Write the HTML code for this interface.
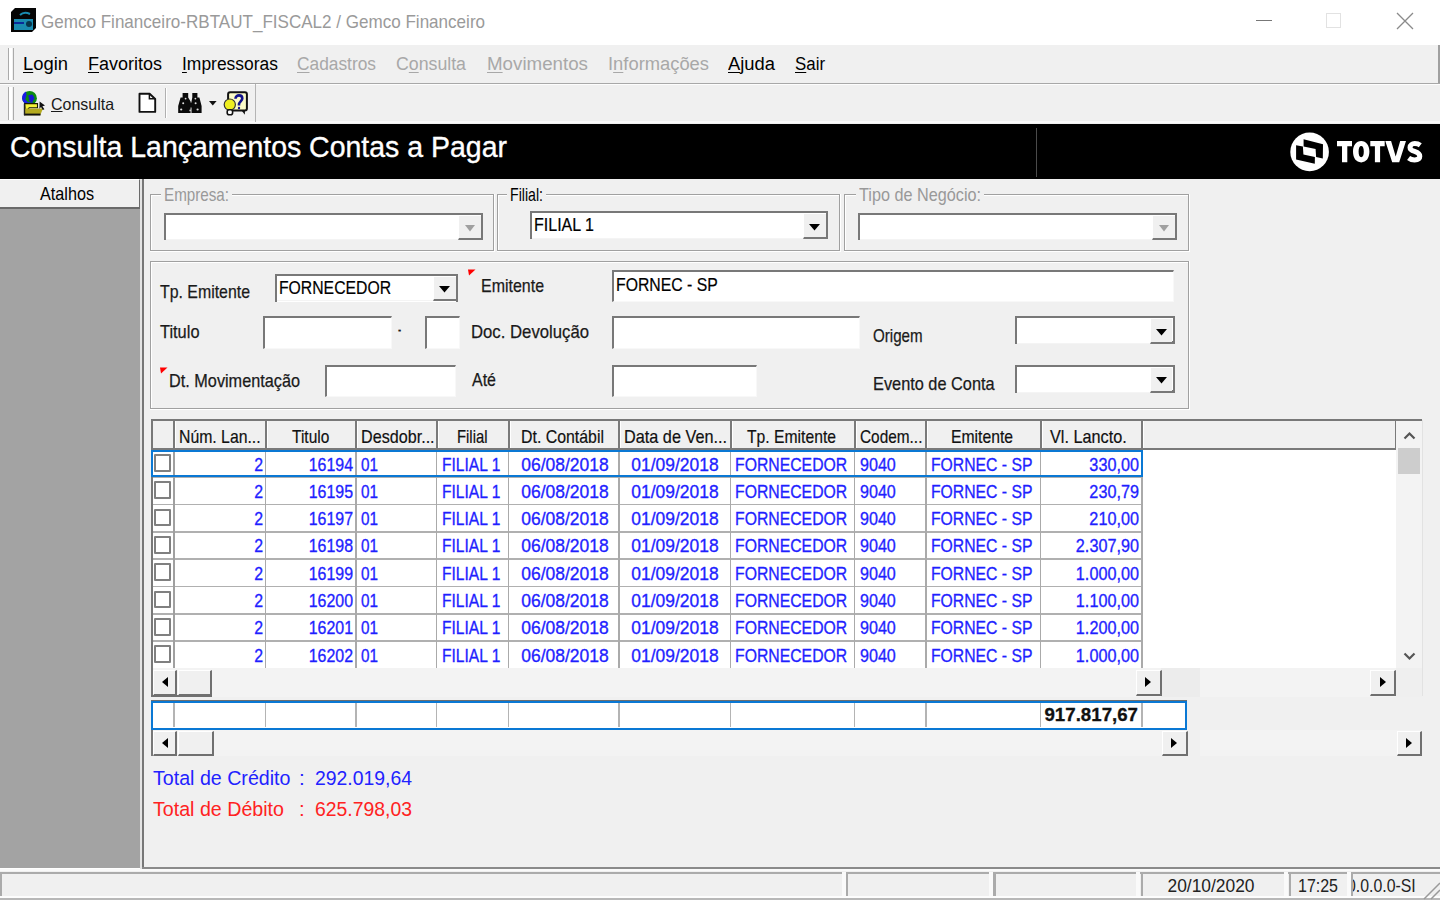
<!DOCTYPE html>
<html><head><meta charset="utf-8"><style>
html,body{margin:0;padding:0;width:1440px;height:900px;overflow:hidden;background:#f0f0f0;font-family:"Liberation Sans", sans-serif;}
body>div,body>svg,div>div{position:absolute;}
svg{position:absolute;overflow:visible}
u{text-decoration-thickness:1.3px}
</style></head><body>
<div style="left:0.00px;top:0.00px;width:1440.00px;height:45.00px;background:#fff"></div>
<svg style="left:11px;top:8px" width="26" height="25" viewBox="0 0 26 25">
<path d="M4 0H25V20L21 24H0V4Z" fill="#050505"/>
<rect x="3" y="11" width="19" height="11" fill="#1a8bb0"/>
<rect x="3" y="14" width="10" height="2" fill="#0a2a9a"/>
<circle cx="18" cy="16" r="3" fill="#06354a"/>
<path d="M9 7 Q13 3 19 6" stroke="#1a8bb0" stroke-width="2" fill="none"/>
</svg>
<div style="left:41.00px;top:11.92px;font-size:19px;line-height:19px;color:#9a9a9a;font-weight:normal;white-space:pre;transform:scaleX(0.8973);transform-origin:left center;">Gemco Financeiro-RBTAUT_FISCAL2 / Gemco Financeiro</div>
<div style="left:1256.00px;top:20.00px;width:16.00px;height:1.00px;background:#777"></div>
<div style="left:1326.00px;top:13.00px;width:15.00px;height:15.00px;border:1px solid #e2e2e2;box-sizing:border-box"></div>
<svg style="left:1396px;top:12px" width="18" height="18" viewBox="0 0 18 18"><path d="M1 1L17 17M17 1L1 17" stroke="#8a8a8a" stroke-width="1.3"/></svg>
<div style="left:0.00px;top:44.50px;width:1440.00px;height:38.50px;background:#f0f0f0"></div>
<div style="left:0.00px;top:82.60px;width:1440.00px;height:1.50px;background:#a8a8a8"></div>
<div style="left:0.00px;top:84.10px;width:1440.00px;height:1.00px;background:#fdfdfd"></div>
<div style="left:1438.00px;top:45.00px;width:1.50px;height:38.00px;background:#a0a0a0"></div>
<div style="left:8.00px;top:48.00px;width:1.20px;height:32.00px;background:#aaa"></div>
<div style="left:9.20px;top:48.00px;width:2.50px;height:32.00px;background:#fff"></div>
<div style="left:12.50px;top:48.00px;width:1.20px;height:32.00px;background:#aaa"></div>
<div style="left:23.00px;top:54.76px;font-size:18px;line-height:18px;color:#000;font-weight:normal;white-space:pre;transform:scaleX(1.0213);transform-origin:left center;text-underline-offset:2px"><u>L</u>ogin</div>
<div style="left:88.00px;top:54.76px;font-size:18px;line-height:18px;color:#000;font-weight:normal;white-space:pre;transform:scaleX(0.9994);transform-origin:left center;text-underline-offset:2px"><u>F</u>avoritos</div>
<div style="left:181.50px;top:54.76px;font-size:18px;line-height:18px;color:#000;font-weight:normal;white-space:pre;transform:scaleX(0.9691);transform-origin:left center;text-underline-offset:2px"><u>I</u>mpressoras</div>
<div style="left:297.00px;top:54.76px;font-size:18px;line-height:18px;color:#a8a8a8;font-weight:normal;white-space:pre;transform:scaleX(0.9627);transform-origin:left center;text-underline-offset:2px"><u>C</u>adastros</div>
<div style="left:396.00px;top:54.76px;font-size:18px;line-height:18px;color:#a8a8a8;font-weight:normal;white-space:pre;transform:scaleX(0.9850);transform-origin:left center;text-underline-offset:2px">C<u>o</u>nsulta</div>
<div style="left:487.00px;top:54.76px;font-size:18px;line-height:18px;color:#a8a8a8;font-weight:normal;white-space:pre;transform:scaleX(1.0406);transform-origin:left center;text-underline-offset:2px"><u>M</u>ovimentos</div>
<div style="left:608.00px;top:54.76px;font-size:18px;line-height:18px;color:#a8a8a8;font-weight:normal;white-space:pre;transform:scaleX(1.0194);transform-origin:left center;text-underline-offset:2px">I<u>n</u>formações</div>
<div style="left:728.00px;top:54.76px;font-size:18px;line-height:18px;color:#000;font-weight:normal;white-space:pre;transform:scaleX(1.0207);transform-origin:left center;text-underline-offset:2px"><u>A</u>juda</div>
<div style="left:795.00px;top:54.76px;font-size:18px;line-height:18px;color:#000;font-weight:normal;white-space:pre;transform:scaleX(0.9370);transform-origin:left center;text-underline-offset:2px"><u>S</u>air</div>
<div style="left:0.00px;top:85.00px;width:1440.00px;height:37.00px;background:#f0f0f0"></div>
<div style="left:0.00px;top:121.00px;width:1440.00px;height:1.70px;background:#fafafa"></div>
<div style="left:8.00px;top:87.00px;width:1.20px;height:33.00px;background:#aaa"></div>
<div style="left:9.20px;top:87.00px;width:2.50px;height:33.00px;background:#fff"></div>
<div style="left:12.50px;top:87.00px;width:1.20px;height:33.00px;background:#aaa"></div>
<div style="left:254.50px;top:84.00px;width:1.50px;height:38.00px;background:#b4b4b4"></div>
<svg style="left:16px;top:86px" width="34" height="34" viewBox="0 0 34 34">
<circle cx="13.6" cy="12.2" r="7.3" fill="#0c8c10"/>
<path d="M10 5.6C7.4 6.8 5.8 9.4 6.1 12.4C6.3 14.8 7.6 16.6 9.6 17.6L12 16.2L9.2 13.2L10.6 9.4Z" fill="#1a1ae8"/>
<path d="M12.2 9.2L16.4 8.6L18.6 12L16.2 16.6L13 15L12.8 12Z" fill="#1818d0"/>
<path d="M9.6 17.6C12 19 15.6 19 18 17.4L16.2 16.6L12 16.2Z" fill="#1a1ae8"/>
<path d="M8.6 17.6H21.5V21.8H13.2L9.4 26.4Z" fill="#f4f438" stroke="#1a1a00" stroke-width="1.1"/>
<path d="M8.2 22.4H27L24.2 29.2H8.2Z" fill="#b4aa1e"/>
<rect x="8" y="27.6" width="16.5" height="1.9" fill="#111"/>
<rect x="7.8" y="17.6" width="1.4" height="11.6" fill="#222"/>
<path d="M23.6 15.6L29 19.6L26.4 20.2L28.4 23.2L26.8 24L25 21L23.4 22.8Z" fill="#111"/>
</svg>
<div style="left:51.00px;top:95.63px;font-size:16.5px;line-height:16.5px;color:#1a1a1a;font-weight:normal;white-space:pre;transform:scaleX(0.9676);transform-origin:left center;text-underline-offset:2px-webkit-text-stroke:0.25px #1a1a1a;"><u>C</u>onsulta</div>
<svg style="left:134px;top:86px" width="26" height="30" viewBox="0 0 26 30"><path d="M5.5 7.8H15.6L21.2 13V25.9H5.5Z" fill="#fff" stroke="#111" stroke-width="1.9" stroke-linejoin="round"/><path d="M15.4 7.8V12.8H21.2" fill="none" stroke="#111" stroke-width="1.5"/></svg>
<div style="left:164.50px;top:88.00px;width:1.30px;height:30.00px;background:#b0b0b0"></div>
<div style="left:165.80px;top:88.00px;width:1.00px;height:30.00px;background:#fff"></div>
<svg style="left:176px;top:91px" width="28" height="25" viewBox="0 0 28 25">
<path d="M6.6 2H12.2V6.5L14.6 10.5V22H2.2V15L4.6 6.5H6.6Z" fill="#0a0a0a"/>
<path d="M16.3 2H21.4V6.5H23.4L25.6 15V22H15.5V10.5L16.3 6.5Z" fill="#0a0a0a"/>
<rect x="12" y="11.5" width="4.5" height="5" fill="#0a0a0a"/>
<circle cx="9.6" cy="7.6" r="0.9" fill="#ddd"/><circle cx="7.2" cy="12.2" r="1" fill="#ddd"/><circle cx="5.2" cy="18.5" r="1.1" fill="#ddd"/>
<circle cx="19.4" cy="7.6" r="0.9" fill="#ddd"/><circle cx="19.6" cy="12.2" r="1" fill="#ddd"/><circle cx="21.6" cy="18.5" r="1.1" fill="#ddd"/>
<circle cx="14.2" cy="19.4" r="0.9" fill="#ccc"/>
</svg>
<svg style="left:208.5px;top:101px" width="8" height="5" viewBox="0 0 8 5"><path d="M0 0H7.6L3.8 4.6Z" fill="#111"/></svg>
<svg style="left:222px;top:89px" width="28" height="29" viewBox="0 0 28 29">
<rect x="6.1" y="3.2" width="18.8" height="18.4" rx="2" fill="#fbfbc8" stroke="#111" stroke-width="2"/>
<path d="M13.5 9.8C13.5 7.6 15.2 6.4 17 6.4C19 6.4 20.3 7.6 20.3 9.4C20.3 11.6 17.6 12.6 17 14.8V16.4" fill="none" stroke="#12128c" stroke-width="2.6"/>
<circle cx="17" cy="19" r="1.2" fill="#12128c"/>
<circle cx="7.8" cy="15.6" r="5.6" fill="#eeee20" stroke="#333" stroke-width="1.2"/>
<rect x="5.2" y="20.8" width="5.4" height="5" rx="2" fill="#fff" stroke="#111" stroke-width="1.6"/>
<path d="M19.4 21.2L22.8 25.8L23 21.2Z" fill="#111"/>
</svg>
<div style="left:0.00px;top:123.60px;width:1440.00px;height:55.80px;background:#000"></div>
<div style="left:10.00px;top:132.03px;font-size:29.5px;line-height:29.5px;color:#fff;font-weight:normal;white-space:pre;transform:scaleX(0.9651);transform-origin:left center;-webkit-text-stroke:0.35px #fff;">Consulta Lançamentos Contas a Pagar</div>
<div style="left:1036.00px;top:128.00px;width:1.00px;height:48.50px;background:#4a4a4a"></div>
<svg style="left:1288px;top:130px" width="44" height="44" viewBox="0 0 44 44">
<circle cx="21.6" cy="21.9" r="19.3" fill="#fff"/>
<path d="M15.6 9.3L35 14.2L34.8 28.4L28.1 27.1L27.6 19.1L15.6 16.4Z" fill="#000"/>
<path d="M8.1 15.2L14.9 16.4L15.4 24.4L26.9 26.9L26.8 33.7L8.1 29.6Z" fill="#000"/>
</svg>
<svg style="left:0px;top:0px" width="1440" height="200" viewBox="0 0 1440 200">
<path d="M1337 141H1352V146.2H1347.3V162.3H1342V146.2H1337Z" fill="#fff"/>
<path fill-rule="evenodd" fill="#fff" d="M1361.2 140.9C1366.2 140.9 1369.4 145 1369.4 151.6C1369.4 158.2 1366.2 162.4 1361.2 162.4C1356.2 162.4 1353 158.2 1353 151.6C1353 145 1356.2 140.9 1361.2 140.9ZM1361.2 146C1359.5 146 1358.6 148 1358.6 151.6C1358.6 155.2 1359.5 157.3 1361.2 157.3C1362.9 157.3 1363.8 155.2 1363.8 151.6C1363.8 148 1362.9 146 1361.2 146Z"/>
<path d="M1370.3 141H1384.7V146.2H1380.1V162.3H1374.9V146.2H1370.3Z" fill="#fff"/>
<path d="M1385.3 141H1391.1L1395.7 156.5L1400.2 141H1406L1399.2 162.3H1392.2Z" fill="#fff"/>
<path d="M1420.3 145.3C1418.8 144.2 1416.8 143.6 1414.8 143.6C1411.9 143.6 1410 145 1410 147.4C1410 152.8 1419.8 150 1419.8 156.3C1419.8 158.6 1417.8 159.9 1414.6 159.9C1412.4 159.9 1410.3 159.2 1408.6 157.9" fill="none" stroke="#fff" stroke-width="5"/>
</svg>
<div style="left:0.00px;top:179.00px;width:140.00px;height:689.00px;background:#a3a3a3"></div>
<div style="left:0.00px;top:179.00px;width:139.50px;height:29.50px;background:#f0f0f0;border-top:1.2px solid #fff;border-right:1.5px solid #6a6a6a;border-bottom:2px solid #6a6a6a;box-sizing:border-box"></div>
<div style="left:-333.00px;width:800px;text-align:center;top:183.92px;font-size:19px;line-height:19px;color:#000;font-weight:normal;white-space:pre;transform:scaleX(0.8523);transform-origin:center center;">Atalhos</div>
<div style="left:0.00px;top:868.00px;width:140.00px;height:2.00px;background:#fff"></div>
<div style="left:140.00px;top:179.00px;width:1300.00px;height:689.00px;background:#f0f0f0"></div>
<div style="left:139.70px;top:179.00px;width:2.50px;height:690.50px;background:#e4e4e4"></div>
<div style="left:142.20px;top:179.00px;width:1.60px;height:690.00px;background:#777"></div>
<div style="left:142.20px;top:867.00px;width:1297.80px;height:2.00px;background:#8a8a8a"></div>
<div style="left:0.00px;top:869.00px;width:1440.00px;height:2.00px;background:#fafafa"></div>
<div style="left:150.00px;top:194.00px;width:344.00px;height:57.00px;border:1px solid #a0a0a0;box-sizing:border-box"></div>
<div style="left:151.00px;top:195.00px;width:344.00px;height:57.00px;border:1px solid #fff;border-right:none;border-bottom:none;box-sizing:border-box"></div>
<div style="left:150.00px;top:251.00px;width:345.00px;height:1.00px;background:#fff"></div>
<div style="left:494.00px;top:194.00px;width:1.00px;height:58.00px;background:#fff"></div>
<div style="left:493.00px;top:194.00px;width:1.00px;height:57.00px;background:#a0a0a0"></div>
<div style="left:150.00px;top:250.00px;width:344.00px;height:1.00px;background:#a0a0a0"></div>
<div style="left:161.00px;top:188.00px;width:71.00px;height:10.00px;background:#f0f0f0"></div>
<div style="left:164.00px;top:184.92px;font-size:19px;line-height:19px;color:#999999;font-weight:normal;white-space:pre;transform:scaleX(0.7995);transform-origin:left center;">Empresa:</div>
<div style="left:497.00px;top:194.00px;width:343.00px;height:57.00px;border:1px solid #a0a0a0;box-sizing:border-box"></div>
<div style="left:498.00px;top:195.00px;width:343.00px;height:57.00px;border:1px solid #fff;border-right:none;border-bottom:none;box-sizing:border-box"></div>
<div style="left:497.00px;top:251.00px;width:344.00px;height:1.00px;background:#fff"></div>
<div style="left:840.00px;top:194.00px;width:1.00px;height:58.00px;background:#fff"></div>
<div style="left:839.00px;top:194.00px;width:1.00px;height:57.00px;background:#a0a0a0"></div>
<div style="left:497.00px;top:250.00px;width:343.00px;height:1.00px;background:#a0a0a0"></div>
<div style="left:507.00px;top:188.00px;width:39.00px;height:10.00px;background:#f0f0f0"></div>
<div style="left:510.00px;top:184.92px;font-size:19px;line-height:19px;color:#000;font-weight:normal;white-space:pre;transform:scaleX(0.7444);transform-origin:left center;">Filial:</div>
<div style="left:844.00px;top:194.00px;width:345.00px;height:57.00px;border:1px solid #a0a0a0;box-sizing:border-box"></div>
<div style="left:845.00px;top:195.00px;width:345.00px;height:57.00px;border:1px solid #fff;border-right:none;border-bottom:none;box-sizing:border-box"></div>
<div style="left:844.00px;top:251.00px;width:346.00px;height:1.00px;background:#fff"></div>
<div style="left:1189.00px;top:194.00px;width:1.00px;height:58.00px;background:#fff"></div>
<div style="left:1188.00px;top:194.00px;width:1.00px;height:57.00px;background:#a0a0a0"></div>
<div style="left:844.00px;top:250.00px;width:345.00px;height:1.00px;background:#a0a0a0"></div>
<div style="left:856.00px;top:188.00px;width:128.00px;height:10.00px;background:#f0f0f0"></div>
<div style="left:859.00px;top:184.92px;font-size:19px;line-height:19px;color:#999999;font-weight:normal;white-space:pre;transform:scaleX(0.8537);transform-origin:left center;">Tipo de Negócio:</div>
<div style="left:164.00px;top:212.80px;width:319.00px;height:27.70px;background:#fff;border-top:2.3px solid #787878;border-left:2.3px solid #787878;border-right:2.2px solid #787878;box-sizing:border-box"></div>
<div style="left:166.00px;top:239.30px;width:292.00px;height:1.20px;background:#f4f4f4"></div>
<div style="left:458.00px;top:215.10px;width:22.80px;height:25.40px;background:#f0f0f0;border-left:1.2px solid #fff;border-top:1.2px solid #fff;border-bottom:2.6px solid #787878;box-sizing:border-box"></div>
<div style="left:480.60px;top:237.90px;width:2.40px;height:2.60px;background:#787878"></div>
<svg style="left:464.50px;top:225.20px" width="10" height="7" viewBox="0 0 10 7"><path d="M0 0H10L5.0 6.5Z" fill="#a0a0a0"/></svg>
<div style="left:530.00px;top:210.80px;width:298.40px;height:28.60px;background:#fff;border-top:2.3px solid #787878;border-left:2.3px solid #787878;border-right:2.2px solid #787878;box-sizing:border-box"></div>
<div style="left:532.00px;top:238.20px;width:271.40px;height:1.20px;background:#f4f4f4"></div>
<div style="left:803.40px;top:213.10px;width:22.80px;height:26.30px;background:#f0f0f0;border-left:1.2px solid #fff;border-top:1.2px solid #fff;border-bottom:2.6px solid #787878;box-sizing:border-box"></div>
<div style="left:826.00px;top:236.80px;width:2.40px;height:2.60px;background:#787878"></div>
<svg style="left:809.40px;top:223.65px" width="11" height="7" viewBox="0 0 11 7"><path d="M0 0H11L5.5 6.5Z" fill="#000"/></svg>
<div style="left:534.00px;top:215.42px;font-size:19px;line-height:19px;color:#000;font-weight:normal;white-space:pre;transform:scaleX(0.8438);transform-origin:left center;-webkit-text-stroke:0.2px #000;">FILIAL 1</div>
<div style="left:858.00px;top:212.80px;width:319.30px;height:27.50px;background:#fff;border-top:2.3px solid #787878;border-left:2.3px solid #787878;border-right:2.2px solid #787878;box-sizing:border-box"></div>
<div style="left:860.00px;top:239.10px;width:292.30px;height:1.20px;background:#f4f4f4"></div>
<div style="left:1152.30px;top:215.10px;width:22.80px;height:25.20px;background:#f0f0f0;border-left:1.2px solid #fff;border-top:1.2px solid #fff;border-bottom:2.6px solid #787878;box-sizing:border-box"></div>
<div style="left:1174.90px;top:237.70px;width:2.40px;height:2.60px;background:#787878"></div>
<svg style="left:1158.80px;top:225.10px" width="10" height="7" viewBox="0 0 10 7"><path d="M0 0H10L5.0 6.5Z" fill="#a0a0a0"/></svg>
<div style="left:150.00px;top:261.00px;width:1039.00px;height:148.00px;border:1px solid #a0a0a0;box-sizing:border-box"></div>
<div style="left:151.00px;top:262.00px;width:1039.00px;height:148.00px;border:1px solid #fff;border-right:none;border-bottom:none;box-sizing:border-box"></div>
<div style="left:150.00px;top:409.00px;width:1040.00px;height:1.00px;background:#fff"></div>
<div style="left:1189.00px;top:261.00px;width:1.00px;height:149.00px;background:#fff"></div>
<div style="left:1188.00px;top:261.00px;width:1.00px;height:148.00px;background:#a0a0a0"></div>
<div style="left:150.00px;top:408.00px;width:1039.00px;height:1.00px;background:#a0a0a0"></div>
<div style="left:160.00px;top:281.92px;font-size:19px;line-height:19px;color:#1a1a1a;font-weight:normal;white-space:pre;transform:scaleX(0.8356);transform-origin:left center;-webkit-text-stroke:0.25px #1a1a1a;">Tp. Emitente</div>
<div style="left:275.00px;top:273.50px;width:183.00px;height:28.00px;background:#fff;border-top:2.3px solid #787878;border-left:2.3px solid #787878;border-right:2.2px solid #787878;box-sizing:border-box"></div>
<div style="left:277.00px;top:300.30px;width:156.00px;height:1.20px;background:#f4f4f4"></div>
<div style="left:433.00px;top:275.80px;width:22.80px;height:25.70px;background:#f0f0f0;border-left:1.2px solid #fff;border-top:1.2px solid #fff;border-bottom:2.6px solid #787878;box-sizing:border-box"></div>
<div style="left:455.60px;top:298.90px;width:2.40px;height:2.60px;background:#787878"></div>
<svg style="left:439.00px;top:286.05px" width="11" height="7" viewBox="0 0 11 7"><path d="M0 0H11L5.5 6.5Z" fill="#000"/></svg>
<div style="left:279.00px;top:277.92px;font-size:19px;line-height:19px;color:#000;font-weight:normal;white-space:pre;transform:scaleX(0.8290);transform-origin:left center;-webkit-text-stroke:0.2px #000;">FORNECEDOR</div>
<svg style="left:467.6px;top:269.4px" width="8" height="7" viewBox="0 0 8 7"><path d="M0 0.5H7.5L1 6.5Z" fill="#f00"/></svg>
<div style="left:481.00px;top:276.42px;font-size:19px;line-height:19px;color:#1a1a1a;font-weight:normal;white-space:pre;transform:scaleX(0.8404);transform-origin:left center;-webkit-text-stroke:0.25px #1a1a1a;">Emitente</div>
<div style="left:611.50px;top:270.00px;width:562.50px;height:32.00px;background:#fff;border-top:2.3px solid #787878;border-left:2.3px solid #787878;border-bottom:1.3px solid #f8f8f8;border-right:1.3px solid #f8f8f8;box-sizing:border-box"></div>
<div style="left:616.00px;top:274.92px;font-size:19px;line-height:19px;color:#000;font-weight:normal;white-space:pre;transform:scaleX(0.8305);transform-origin:left center;-webkit-text-stroke:0.2px #000;">FORNEC - SP</div>
<div style="left:160.00px;top:321.92px;font-size:19px;line-height:19px;color:#1a1a1a;font-weight:normal;white-space:pre;transform:scaleX(0.8634);transform-origin:left center;-webkit-text-stroke:0.25px #1a1a1a;">Titulo</div>
<div style="left:262.50px;top:316.00px;width:129.00px;height:32.50px;background:#fff;border-top:2.3px solid #787878;border-left:2.3px solid #787878;border-bottom:1.3px solid #f8f8f8;border-right:1.3px solid #f8f8f8;box-sizing:border-box"></div>
<div style="left:398.30px;top:319.92px;font-size:19px;line-height:19px;color:#1a1a1a;font-weight:normal;white-space:pre;transform:scaleX(0.5057);transform-origin:left center;-webkit-text-stroke:0.2px #1a1a1a;">-</div>
<div style="left:425.00px;top:316.00px;width:34.50px;height:32.50px;background:#fff;border-top:2.3px solid #787878;border-left:2.3px solid #787878;border-bottom:1.3px solid #f8f8f8;border-right:1.3px solid #f8f8f8;box-sizing:border-box"></div>
<div style="left:471.00px;top:321.92px;font-size:19px;line-height:19px;color:#1a1a1a;font-weight:normal;white-space:pre;transform:scaleX(0.8800);transform-origin:left center;-webkit-text-stroke:0.25px #1a1a1a;">Doc. Devolução</div>
<div style="left:611.50px;top:316.00px;width:248.50px;height:33.00px;background:#fff;border-top:2.3px solid #787878;border-left:2.3px solid #787878;border-bottom:1.3px solid #f8f8f8;border-right:1.3px solid #f8f8f8;box-sizing:border-box"></div>
<div style="left:873.00px;top:325.92px;font-size:19px;line-height:19px;color:#1a1a1a;font-weight:normal;white-space:pre;transform:scaleX(0.7964);transform-origin:left center;-webkit-text-stroke:0.25px #1a1a1a;">Origem</div>
<div style="left:1014.50px;top:316.00px;width:160.00px;height:28.00px;background:#fff;border-top:2.3px solid #787878;border-left:2.3px solid #787878;border-right:2.2px solid #787878;box-sizing:border-box"></div>
<div style="left:1016.50px;top:342.80px;width:133.00px;height:1.20px;background:#f4f4f4"></div>
<div style="left:1149.50px;top:318.30px;width:22.80px;height:25.70px;background:#f0f0f0;border-left:1.2px solid #fff;border-top:1.2px solid #fff;border-bottom:2.6px solid #787878;box-sizing:border-box"></div>
<div style="left:1172.10px;top:341.40px;width:2.40px;height:2.60px;background:#787878"></div>
<svg style="left:1155.50px;top:328.55px" width="11" height="7" viewBox="0 0 11 7"><path d="M0 0H11L5.5 6.5Z" fill="#000"/></svg>
<svg style="left:159.6px;top:366.8px" width="8" height="7" viewBox="0 0 8 7"><path d="M0 0.5H7.5L1 6.5Z" fill="#f00"/></svg>
<div style="left:169.00px;top:370.92px;font-size:19px;line-height:19px;color:#1a1a1a;font-weight:normal;white-space:pre;transform:scaleX(0.8557);transform-origin:left center;-webkit-text-stroke:0.25px #1a1a1a;">Dt. Movimentação</div>
<div style="left:325.00px;top:365.00px;width:130.50px;height:32.00px;background:#fff;border-top:2.3px solid #787878;border-left:2.3px solid #787878;border-bottom:1.3px solid #f8f8f8;border-right:1.3px solid #f8f8f8;box-sizing:border-box"></div>
<div style="left:472.00px;top:370.42px;font-size:19px;line-height:19px;color:#1a1a1a;font-weight:normal;white-space:pre;transform:scaleX(0.8416);transform-origin:left center;-webkit-text-stroke:0.25px #1a1a1a;">Até</div>
<div style="left:611.50px;top:365.00px;width:145.50px;height:32.00px;background:#fff;border-top:2.3px solid #787878;border-left:2.3px solid #787878;border-bottom:1.3px solid #f8f8f8;border-right:1.3px solid #f8f8f8;box-sizing:border-box"></div>
<div style="left:873.00px;top:373.92px;font-size:19px;line-height:19px;color:#1a1a1a;font-weight:normal;white-space:pre;transform:scaleX(0.8593);transform-origin:left center;-webkit-text-stroke:0.25px #1a1a1a;">Evento de Conta</div>
<div style="left:1014.50px;top:364.50px;width:160.00px;height:28.50px;background:#fff;border-top:2.3px solid #787878;border-left:2.3px solid #787878;border-right:2.2px solid #787878;box-sizing:border-box"></div>
<div style="left:1016.50px;top:391.80px;width:133.00px;height:1.20px;background:#f4f4f4"></div>
<div style="left:1149.50px;top:366.80px;width:22.80px;height:26.20px;background:#f0f0f0;border-left:1.2px solid #fff;border-top:1.2px solid #fff;border-bottom:2.6px solid #787878;box-sizing:border-box"></div>
<div style="left:1172.10px;top:390.40px;width:2.40px;height:2.60px;background:#787878"></div>
<svg style="left:1155.50px;top:377.30px" width="11" height="7" viewBox="0 0 11 7"><path d="M0 0H11L5.5 6.5Z" fill="#000"/></svg>
<div style="left:151.00px;top:419.50px;width:1271.00px;height:277.00px;background:#f0f0f0"></div>
<div style="left:151.00px;top:419.40px;width:1271.00px;height:1.90px;background:#787878"></div>
<div style="left:150.60px;top:419.50px;width:2.00px;height:276.50px;background:#787878"></div>
<div style="left:152.50px;top:421.20px;width:1243.50px;height:28.30px;background:#f0f0f0"></div>
<div style="left:152.50px;top:448.00px;width:1243.50px;height:1.50px;background:#7a7a7a"></div>
<div style="left:173.00px;top:421.20px;width:2.00px;height:28.30px;background:#7a7a7a"></div>
<div style="left:175.00px;top:421.20px;width:1.00px;height:26.80px;background:#fff"></div>
<div style="left:264.50px;top:421.20px;width:2.00px;height:28.30px;background:#7a7a7a"></div>
<div style="left:266.50px;top:421.20px;width:1.00px;height:26.80px;background:#fff"></div>
<div style="left:355.00px;top:421.20px;width:2.00px;height:28.30px;background:#7a7a7a"></div>
<div style="left:357.00px;top:421.20px;width:1.00px;height:26.80px;background:#fff"></div>
<div style="left:435.50px;top:421.20px;width:2.00px;height:28.30px;background:#7a7a7a"></div>
<div style="left:437.50px;top:421.20px;width:1.00px;height:26.80px;background:#fff"></div>
<div style="left:507.50px;top:421.20px;width:2.00px;height:28.30px;background:#7a7a7a"></div>
<div style="left:509.50px;top:421.20px;width:1.00px;height:26.80px;background:#fff"></div>
<div style="left:618.00px;top:421.20px;width:2.00px;height:28.30px;background:#7a7a7a"></div>
<div style="left:620.00px;top:421.20px;width:1.00px;height:26.80px;background:#fff"></div>
<div style="left:729.50px;top:421.20px;width:2.00px;height:28.30px;background:#7a7a7a"></div>
<div style="left:731.50px;top:421.20px;width:1.00px;height:26.80px;background:#fff"></div>
<div style="left:853.50px;top:421.20px;width:2.00px;height:28.30px;background:#7a7a7a"></div>
<div style="left:855.50px;top:421.20px;width:1.00px;height:26.80px;background:#fff"></div>
<div style="left:925.00px;top:421.20px;width:2.00px;height:28.30px;background:#7a7a7a"></div>
<div style="left:927.00px;top:421.20px;width:1.00px;height:26.80px;background:#fff"></div>
<div style="left:1039.50px;top:421.20px;width:2.00px;height:28.30px;background:#7a7a7a"></div>
<div style="left:1041.50px;top:421.20px;width:1.00px;height:26.80px;background:#fff"></div>
<div style="left:1141.00px;top:421.20px;width:2.00px;height:28.30px;background:#7a7a7a"></div>
<div style="left:1143.00px;top:421.20px;width:1.00px;height:26.80px;background:#fff"></div>
<div style="left:1395.00px;top:421.20px;width:2.00px;height:28.30px;background:#7a7a7a"></div>
<div style="left:1397.00px;top:421.20px;width:1.00px;height:26.80px;background:#fff"></div>
<div style="left:179.40px;top:427.22px;font-size:19px;line-height:19px;color:#111;font-weight:normal;white-space:pre;transform:scaleX(0.8309);transform-origin:left center;-webkit-text-stroke:0.2px #111;">Núm. Lan...</div>
<div style="left:291.70px;top:427.22px;font-size:19px;line-height:19px;color:#111;font-weight:normal;white-space:pre;transform:scaleX(0.8153);transform-origin:left center;-webkit-text-stroke:0.2px #111;">Titulo</div>
<div style="left:361.00px;top:427.22px;font-size:19px;line-height:19px;color:#111;font-weight:normal;white-space:pre;transform:scaleX(0.8499);transform-origin:left center;-webkit-text-stroke:0.2px #111;">Desdobr...</div>
<div style="left:457.00px;top:427.22px;font-size:19px;line-height:19px;color:#111;font-weight:normal;white-space:pre;transform:scaleX(0.7811);transform-origin:left center;-webkit-text-stroke:0.2px #111;">Filial</div>
<div style="left:520.80px;top:427.22px;font-size:19px;line-height:19px;color:#111;font-weight:normal;white-space:pre;transform:scaleX(0.8363);transform-origin:left center;-webkit-text-stroke:0.2px #111;">Dt. Contábil</div>
<div style="left:624.40px;top:427.22px;font-size:19px;line-height:19px;color:#111;font-weight:normal;white-space:pre;transform:scaleX(0.8554);transform-origin:left center;-webkit-text-stroke:0.2px #111;">Data de Ven...</div>
<div style="left:747.00px;top:427.22px;font-size:19px;line-height:19px;color:#111;font-weight:normal;white-space:pre;transform:scaleX(0.8263);transform-origin:left center;-webkit-text-stroke:0.2px #111;">Tp. Emitente</div>
<div style="left:860.00px;top:427.22px;font-size:19px;line-height:19px;color:#111;font-weight:normal;white-space:pre;transform:scaleX(0.8096);transform-origin:left center;-webkit-text-stroke:0.2px #111;">Codem...</div>
<div style="left:951.00px;top:427.22px;font-size:19px;line-height:19px;color:#111;font-weight:normal;white-space:pre;transform:scaleX(0.8270);transform-origin:left center;-webkit-text-stroke:0.2px #111;">Emitente</div>
<div style="left:1050.00px;top:427.22px;font-size:19px;line-height:19px;color:#111;font-weight:normal;white-space:pre;transform:scaleX(0.8544);transform-origin:left center;-webkit-text-stroke:0.2px #111;">Vl. Lancto.</div>
<div style="left:152.80px;top:449.50px;width:1243.20px;height:218.50px;background:#fff"></div>
<div style="left:152.80px;top:476.58px;width:989.20px;height:1.60px;background:#b0b0b0"></div>
<div style="left:154.40px;top:454.10px;width:16.40px;height:17.80px;border:2px solid #808080;border-radius:1px;box-sizing:border-box;background:#fff"></div>
<div style="left:-337.40px;width:600px;text-align:right;top:454.62px;font-size:19px;line-height:19px;color:#1f1fff;font-weight:normal;white-space:pre;transform:scaleX(0.8379);transform-origin:right center;-webkit-text-stroke:0.35px #1f1fff;">2</div>
<div style="left:-247.20px;width:600px;text-align:right;top:454.62px;font-size:19px;line-height:19px;color:#1f1fff;font-weight:normal;white-space:pre;transform:scaleX(0.8388);transform-origin:right center;-webkit-text-stroke:0.35px #1f1fff;">16194</div>
<div style="left:361.00px;top:454.62px;font-size:19px;line-height:19px;color:#1f1fff;font-weight:normal;white-space:pre;transform:scaleX(0.8047);transform-origin:left center;-webkit-text-stroke:0.35px #1f1fff;">01</div>
<div style="left:441.70px;top:454.62px;font-size:19px;line-height:19px;color:#1f1fff;font-weight:normal;white-space:pre;transform:scaleX(0.8199);transform-origin:left center;-webkit-text-stroke:0.35px #1f1fff;">FILIAL 1</div>
<div style="left:164.50px;width:800px;text-align:center;top:454.62px;font-size:19px;line-height:19px;color:#1f1fff;font-weight:normal;white-space:pre;transform:scaleX(0.9204);transform-origin:center center;-webkit-text-stroke:0.35px #1f1fff;">06/08/2018</div>
<div style="left:275.40px;width:800px;text-align:center;top:454.62px;font-size:19px;line-height:19px;color:#1f1fff;font-weight:normal;white-space:pre;transform:scaleX(0.9183);transform-origin:center center;-webkit-text-stroke:0.35px #1f1fff;">01/09/2018</div>
<div style="left:734.70px;top:454.62px;font-size:19px;line-height:19px;color:#1f1fff;font-weight:normal;white-space:pre;transform:scaleX(0.8304);transform-origin:left center;-webkit-text-stroke:0.35px #1f1fff;">FORNECEDOR</div>
<div style="left:860.00px;top:454.62px;font-size:19px;line-height:19px;color:#1f1fff;font-weight:normal;white-space:pre;transform:scaleX(0.8473);transform-origin:left center;-webkit-text-stroke:0.35px #1f1fff;">9040</div>
<div style="left:931.00px;top:454.62px;font-size:19px;line-height:19px;color:#1f1fff;font-weight:normal;white-space:pre;transform:scaleX(0.8289);transform-origin:left center;-webkit-text-stroke:0.35px #1f1fff;">FORNEC - SP</div>
<div style="left:539.00px;width:600px;text-align:right;top:454.62px;font-size:19px;line-height:19px;color:#1f1fff;font-weight:normal;white-space:pre;transform:scaleX(0.8538);transform-origin:right center;-webkit-text-stroke:0.35px #1f1fff;">330,00</div>
<div style="left:152.80px;top:503.86px;width:989.20px;height:1.60px;background:#b0b0b0"></div>
<div style="left:154.40px;top:481.38px;width:16.40px;height:17.80px;border:2px solid #808080;border-radius:1px;box-sizing:border-box;background:#fff"></div>
<div style="left:-337.40px;width:600px;text-align:right;top:481.90px;font-size:19px;line-height:19px;color:#1f1fff;font-weight:normal;white-space:pre;transform:scaleX(0.8379);transform-origin:right center;-webkit-text-stroke:0.35px #1f1fff;">2</div>
<div style="left:-247.20px;width:600px;text-align:right;top:481.90px;font-size:19px;line-height:19px;color:#1f1fff;font-weight:normal;white-space:pre;transform:scaleX(0.8388);transform-origin:right center;-webkit-text-stroke:0.35px #1f1fff;">16195</div>
<div style="left:361.00px;top:481.90px;font-size:19px;line-height:19px;color:#1f1fff;font-weight:normal;white-space:pre;transform:scaleX(0.8047);transform-origin:left center;-webkit-text-stroke:0.35px #1f1fff;">01</div>
<div style="left:441.70px;top:481.90px;font-size:19px;line-height:19px;color:#1f1fff;font-weight:normal;white-space:pre;transform:scaleX(0.8199);transform-origin:left center;-webkit-text-stroke:0.35px #1f1fff;">FILIAL 1</div>
<div style="left:164.50px;width:800px;text-align:center;top:481.90px;font-size:19px;line-height:19px;color:#1f1fff;font-weight:normal;white-space:pre;transform:scaleX(0.9204);transform-origin:center center;-webkit-text-stroke:0.35px #1f1fff;">06/08/2018</div>
<div style="left:275.40px;width:800px;text-align:center;top:481.90px;font-size:19px;line-height:19px;color:#1f1fff;font-weight:normal;white-space:pre;transform:scaleX(0.9183);transform-origin:center center;-webkit-text-stroke:0.35px #1f1fff;">01/09/2018</div>
<div style="left:734.70px;top:481.90px;font-size:19px;line-height:19px;color:#1f1fff;font-weight:normal;white-space:pre;transform:scaleX(0.8304);transform-origin:left center;-webkit-text-stroke:0.35px #1f1fff;">FORNECEDOR</div>
<div style="left:860.00px;top:481.90px;font-size:19px;line-height:19px;color:#1f1fff;font-weight:normal;white-space:pre;transform:scaleX(0.8473);transform-origin:left center;-webkit-text-stroke:0.35px #1f1fff;">9040</div>
<div style="left:931.00px;top:481.90px;font-size:19px;line-height:19px;color:#1f1fff;font-weight:normal;white-space:pre;transform:scaleX(0.8289);transform-origin:left center;-webkit-text-stroke:0.35px #1f1fff;">FORNEC - SP</div>
<div style="left:539.00px;width:600px;text-align:right;top:481.90px;font-size:19px;line-height:19px;color:#1f1fff;font-weight:normal;white-space:pre;transform:scaleX(0.8538);transform-origin:right center;-webkit-text-stroke:0.35px #1f1fff;">230,79</div>
<div style="left:152.80px;top:531.14px;width:989.20px;height:1.60px;background:#b0b0b0"></div>
<div style="left:154.40px;top:508.66px;width:16.40px;height:17.80px;border:2px solid #808080;border-radius:1px;box-sizing:border-box;background:#fff"></div>
<div style="left:-337.40px;width:600px;text-align:right;top:509.18px;font-size:19px;line-height:19px;color:#1f1fff;font-weight:normal;white-space:pre;transform:scaleX(0.8379);transform-origin:right center;-webkit-text-stroke:0.35px #1f1fff;">2</div>
<div style="left:-247.20px;width:600px;text-align:right;top:509.18px;font-size:19px;line-height:19px;color:#1f1fff;font-weight:normal;white-space:pre;transform:scaleX(0.8388);transform-origin:right center;-webkit-text-stroke:0.35px #1f1fff;">16197</div>
<div style="left:361.00px;top:509.18px;font-size:19px;line-height:19px;color:#1f1fff;font-weight:normal;white-space:pre;transform:scaleX(0.8047);transform-origin:left center;-webkit-text-stroke:0.35px #1f1fff;">01</div>
<div style="left:441.70px;top:509.18px;font-size:19px;line-height:19px;color:#1f1fff;font-weight:normal;white-space:pre;transform:scaleX(0.8199);transform-origin:left center;-webkit-text-stroke:0.35px #1f1fff;">FILIAL 1</div>
<div style="left:164.50px;width:800px;text-align:center;top:509.18px;font-size:19px;line-height:19px;color:#1f1fff;font-weight:normal;white-space:pre;transform:scaleX(0.9204);transform-origin:center center;-webkit-text-stroke:0.35px #1f1fff;">06/08/2018</div>
<div style="left:275.40px;width:800px;text-align:center;top:509.18px;font-size:19px;line-height:19px;color:#1f1fff;font-weight:normal;white-space:pre;transform:scaleX(0.9183);transform-origin:center center;-webkit-text-stroke:0.35px #1f1fff;">01/09/2018</div>
<div style="left:734.70px;top:509.18px;font-size:19px;line-height:19px;color:#1f1fff;font-weight:normal;white-space:pre;transform:scaleX(0.8304);transform-origin:left center;-webkit-text-stroke:0.35px #1f1fff;">FORNECEDOR</div>
<div style="left:860.00px;top:509.18px;font-size:19px;line-height:19px;color:#1f1fff;font-weight:normal;white-space:pre;transform:scaleX(0.8473);transform-origin:left center;-webkit-text-stroke:0.35px #1f1fff;">9040</div>
<div style="left:931.00px;top:509.18px;font-size:19px;line-height:19px;color:#1f1fff;font-weight:normal;white-space:pre;transform:scaleX(0.8289);transform-origin:left center;-webkit-text-stroke:0.35px #1f1fff;">FORNEC - SP</div>
<div style="left:539.00px;width:600px;text-align:right;top:509.18px;font-size:19px;line-height:19px;color:#1f1fff;font-weight:normal;white-space:pre;transform:scaleX(0.8538);transform-origin:right center;-webkit-text-stroke:0.35px #1f1fff;">210,00</div>
<div style="left:152.80px;top:558.42px;width:989.20px;height:1.60px;background:#b0b0b0"></div>
<div style="left:154.40px;top:535.94px;width:16.40px;height:17.80px;border:2px solid #808080;border-radius:1px;box-sizing:border-box;background:#fff"></div>
<div style="left:-337.40px;width:600px;text-align:right;top:536.46px;font-size:19px;line-height:19px;color:#1f1fff;font-weight:normal;white-space:pre;transform:scaleX(0.8379);transform-origin:right center;-webkit-text-stroke:0.35px #1f1fff;">2</div>
<div style="left:-247.20px;width:600px;text-align:right;top:536.46px;font-size:19px;line-height:19px;color:#1f1fff;font-weight:normal;white-space:pre;transform:scaleX(0.8388);transform-origin:right center;-webkit-text-stroke:0.35px #1f1fff;">16198</div>
<div style="left:361.00px;top:536.46px;font-size:19px;line-height:19px;color:#1f1fff;font-weight:normal;white-space:pre;transform:scaleX(0.8047);transform-origin:left center;-webkit-text-stroke:0.35px #1f1fff;">01</div>
<div style="left:441.70px;top:536.46px;font-size:19px;line-height:19px;color:#1f1fff;font-weight:normal;white-space:pre;transform:scaleX(0.8199);transform-origin:left center;-webkit-text-stroke:0.35px #1f1fff;">FILIAL 1</div>
<div style="left:164.50px;width:800px;text-align:center;top:536.46px;font-size:19px;line-height:19px;color:#1f1fff;font-weight:normal;white-space:pre;transform:scaleX(0.9204);transform-origin:center center;-webkit-text-stroke:0.35px #1f1fff;">06/08/2018</div>
<div style="left:275.40px;width:800px;text-align:center;top:536.46px;font-size:19px;line-height:19px;color:#1f1fff;font-weight:normal;white-space:pre;transform:scaleX(0.9183);transform-origin:center center;-webkit-text-stroke:0.35px #1f1fff;">01/09/2018</div>
<div style="left:734.70px;top:536.46px;font-size:19px;line-height:19px;color:#1f1fff;font-weight:normal;white-space:pre;transform:scaleX(0.8304);transform-origin:left center;-webkit-text-stroke:0.35px #1f1fff;">FORNECEDOR</div>
<div style="left:860.00px;top:536.46px;font-size:19px;line-height:19px;color:#1f1fff;font-weight:normal;white-space:pre;transform:scaleX(0.8473);transform-origin:left center;-webkit-text-stroke:0.35px #1f1fff;">9040</div>
<div style="left:931.00px;top:536.46px;font-size:19px;line-height:19px;color:#1f1fff;font-weight:normal;white-space:pre;transform:scaleX(0.8289);transform-origin:left center;-webkit-text-stroke:0.35px #1f1fff;">FORNEC - SP</div>
<div style="left:539.00px;width:600px;text-align:right;top:536.46px;font-size:19px;line-height:19px;color:#1f1fff;font-weight:normal;white-space:pre;transform:scaleX(0.8537);transform-origin:right center;-webkit-text-stroke:0.35px #1f1fff;">2.307,90</div>
<div style="left:152.80px;top:585.70px;width:989.20px;height:1.60px;background:#b0b0b0"></div>
<div style="left:154.40px;top:563.22px;width:16.40px;height:17.80px;border:2px solid #808080;border-radius:1px;box-sizing:border-box;background:#fff"></div>
<div style="left:-337.40px;width:600px;text-align:right;top:563.74px;font-size:19px;line-height:19px;color:#1f1fff;font-weight:normal;white-space:pre;transform:scaleX(0.8379);transform-origin:right center;-webkit-text-stroke:0.35px #1f1fff;">2</div>
<div style="left:-247.20px;width:600px;text-align:right;top:563.74px;font-size:19px;line-height:19px;color:#1f1fff;font-weight:normal;white-space:pre;transform:scaleX(0.8388);transform-origin:right center;-webkit-text-stroke:0.35px #1f1fff;">16199</div>
<div style="left:361.00px;top:563.74px;font-size:19px;line-height:19px;color:#1f1fff;font-weight:normal;white-space:pre;transform:scaleX(0.8047);transform-origin:left center;-webkit-text-stroke:0.35px #1f1fff;">01</div>
<div style="left:441.70px;top:563.74px;font-size:19px;line-height:19px;color:#1f1fff;font-weight:normal;white-space:pre;transform:scaleX(0.8199);transform-origin:left center;-webkit-text-stroke:0.35px #1f1fff;">FILIAL 1</div>
<div style="left:164.50px;width:800px;text-align:center;top:563.74px;font-size:19px;line-height:19px;color:#1f1fff;font-weight:normal;white-space:pre;transform:scaleX(0.9204);transform-origin:center center;-webkit-text-stroke:0.35px #1f1fff;">06/08/2018</div>
<div style="left:275.40px;width:800px;text-align:center;top:563.74px;font-size:19px;line-height:19px;color:#1f1fff;font-weight:normal;white-space:pre;transform:scaleX(0.9183);transform-origin:center center;-webkit-text-stroke:0.35px #1f1fff;">01/09/2018</div>
<div style="left:734.70px;top:563.74px;font-size:19px;line-height:19px;color:#1f1fff;font-weight:normal;white-space:pre;transform:scaleX(0.8304);transform-origin:left center;-webkit-text-stroke:0.35px #1f1fff;">FORNECEDOR</div>
<div style="left:860.00px;top:563.74px;font-size:19px;line-height:19px;color:#1f1fff;font-weight:normal;white-space:pre;transform:scaleX(0.8473);transform-origin:left center;-webkit-text-stroke:0.35px #1f1fff;">9040</div>
<div style="left:931.00px;top:563.74px;font-size:19px;line-height:19px;color:#1f1fff;font-weight:normal;white-space:pre;transform:scaleX(0.8289);transform-origin:left center;-webkit-text-stroke:0.35px #1f1fff;">FORNEC - SP</div>
<div style="left:539.00px;width:600px;text-align:right;top:563.74px;font-size:19px;line-height:19px;color:#1f1fff;font-weight:normal;white-space:pre;transform:scaleX(0.8537);transform-origin:right center;-webkit-text-stroke:0.35px #1f1fff;">1.000,00</div>
<div style="left:152.80px;top:612.98px;width:989.20px;height:1.60px;background:#b0b0b0"></div>
<div style="left:154.40px;top:590.50px;width:16.40px;height:17.80px;border:2px solid #808080;border-radius:1px;box-sizing:border-box;background:#fff"></div>
<div style="left:-337.40px;width:600px;text-align:right;top:591.02px;font-size:19px;line-height:19px;color:#1f1fff;font-weight:normal;white-space:pre;transform:scaleX(0.8379);transform-origin:right center;-webkit-text-stroke:0.35px #1f1fff;">2</div>
<div style="left:-247.20px;width:600px;text-align:right;top:591.02px;font-size:19px;line-height:19px;color:#1f1fff;font-weight:normal;white-space:pre;transform:scaleX(0.8388);transform-origin:right center;-webkit-text-stroke:0.35px #1f1fff;">16200</div>
<div style="left:361.00px;top:591.02px;font-size:19px;line-height:19px;color:#1f1fff;font-weight:normal;white-space:pre;transform:scaleX(0.8047);transform-origin:left center;-webkit-text-stroke:0.35px #1f1fff;">01</div>
<div style="left:441.70px;top:591.02px;font-size:19px;line-height:19px;color:#1f1fff;font-weight:normal;white-space:pre;transform:scaleX(0.8199);transform-origin:left center;-webkit-text-stroke:0.35px #1f1fff;">FILIAL 1</div>
<div style="left:164.50px;width:800px;text-align:center;top:591.02px;font-size:19px;line-height:19px;color:#1f1fff;font-weight:normal;white-space:pre;transform:scaleX(0.9204);transform-origin:center center;-webkit-text-stroke:0.35px #1f1fff;">06/08/2018</div>
<div style="left:275.40px;width:800px;text-align:center;top:591.02px;font-size:19px;line-height:19px;color:#1f1fff;font-weight:normal;white-space:pre;transform:scaleX(0.9183);transform-origin:center center;-webkit-text-stroke:0.35px #1f1fff;">01/09/2018</div>
<div style="left:734.70px;top:591.02px;font-size:19px;line-height:19px;color:#1f1fff;font-weight:normal;white-space:pre;transform:scaleX(0.8304);transform-origin:left center;-webkit-text-stroke:0.35px #1f1fff;">FORNECEDOR</div>
<div style="left:860.00px;top:591.02px;font-size:19px;line-height:19px;color:#1f1fff;font-weight:normal;white-space:pre;transform:scaleX(0.8473);transform-origin:left center;-webkit-text-stroke:0.35px #1f1fff;">9040</div>
<div style="left:931.00px;top:591.02px;font-size:19px;line-height:19px;color:#1f1fff;font-weight:normal;white-space:pre;transform:scaleX(0.8289);transform-origin:left center;-webkit-text-stroke:0.35px #1f1fff;">FORNEC - SP</div>
<div style="left:539.00px;width:600px;text-align:right;top:591.02px;font-size:19px;line-height:19px;color:#1f1fff;font-weight:normal;white-space:pre;transform:scaleX(0.8537);transform-origin:right center;-webkit-text-stroke:0.35px #1f1fff;">1.100,00</div>
<div style="left:152.80px;top:640.26px;width:989.20px;height:1.60px;background:#b0b0b0"></div>
<div style="left:154.40px;top:617.78px;width:16.40px;height:17.80px;border:2px solid #808080;border-radius:1px;box-sizing:border-box;background:#fff"></div>
<div style="left:-337.40px;width:600px;text-align:right;top:618.30px;font-size:19px;line-height:19px;color:#1f1fff;font-weight:normal;white-space:pre;transform:scaleX(0.8379);transform-origin:right center;-webkit-text-stroke:0.35px #1f1fff;">2</div>
<div style="left:-247.20px;width:600px;text-align:right;top:618.30px;font-size:19px;line-height:19px;color:#1f1fff;font-weight:normal;white-space:pre;transform:scaleX(0.8388);transform-origin:right center;-webkit-text-stroke:0.35px #1f1fff;">16201</div>
<div style="left:361.00px;top:618.30px;font-size:19px;line-height:19px;color:#1f1fff;font-weight:normal;white-space:pre;transform:scaleX(0.8047);transform-origin:left center;-webkit-text-stroke:0.35px #1f1fff;">01</div>
<div style="left:441.70px;top:618.30px;font-size:19px;line-height:19px;color:#1f1fff;font-weight:normal;white-space:pre;transform:scaleX(0.8199);transform-origin:left center;-webkit-text-stroke:0.35px #1f1fff;">FILIAL 1</div>
<div style="left:164.50px;width:800px;text-align:center;top:618.30px;font-size:19px;line-height:19px;color:#1f1fff;font-weight:normal;white-space:pre;transform:scaleX(0.9204);transform-origin:center center;-webkit-text-stroke:0.35px #1f1fff;">06/08/2018</div>
<div style="left:275.40px;width:800px;text-align:center;top:618.30px;font-size:19px;line-height:19px;color:#1f1fff;font-weight:normal;white-space:pre;transform:scaleX(0.9183);transform-origin:center center;-webkit-text-stroke:0.35px #1f1fff;">01/09/2018</div>
<div style="left:734.70px;top:618.30px;font-size:19px;line-height:19px;color:#1f1fff;font-weight:normal;white-space:pre;transform:scaleX(0.8304);transform-origin:left center;-webkit-text-stroke:0.35px #1f1fff;">FORNECEDOR</div>
<div style="left:860.00px;top:618.30px;font-size:19px;line-height:19px;color:#1f1fff;font-weight:normal;white-space:pre;transform:scaleX(0.8473);transform-origin:left center;-webkit-text-stroke:0.35px #1f1fff;">9040</div>
<div style="left:931.00px;top:618.30px;font-size:19px;line-height:19px;color:#1f1fff;font-weight:normal;white-space:pre;transform:scaleX(0.8289);transform-origin:left center;-webkit-text-stroke:0.35px #1f1fff;">FORNEC - SP</div>
<div style="left:539.00px;width:600px;text-align:right;top:618.30px;font-size:19px;line-height:19px;color:#1f1fff;font-weight:normal;white-space:pre;transform:scaleX(0.8537);transform-origin:right center;-webkit-text-stroke:0.35px #1f1fff;">1.200,00</div>
<div style="left:154.40px;top:645.06px;width:16.40px;height:17.80px;border:2px solid #808080;border-radius:1px;box-sizing:border-box;background:#fff"></div>
<div style="left:-337.40px;width:600px;text-align:right;top:645.58px;font-size:19px;line-height:19px;color:#1f1fff;font-weight:normal;white-space:pre;transform:scaleX(0.8379);transform-origin:right center;-webkit-text-stroke:0.35px #1f1fff;">2</div>
<div style="left:-247.20px;width:600px;text-align:right;top:645.58px;font-size:19px;line-height:19px;color:#1f1fff;font-weight:normal;white-space:pre;transform:scaleX(0.8388);transform-origin:right center;-webkit-text-stroke:0.35px #1f1fff;">16202</div>
<div style="left:361.00px;top:645.58px;font-size:19px;line-height:19px;color:#1f1fff;font-weight:normal;white-space:pre;transform:scaleX(0.8047);transform-origin:left center;-webkit-text-stroke:0.35px #1f1fff;">01</div>
<div style="left:441.70px;top:645.58px;font-size:19px;line-height:19px;color:#1f1fff;font-weight:normal;white-space:pre;transform:scaleX(0.8199);transform-origin:left center;-webkit-text-stroke:0.35px #1f1fff;">FILIAL 1</div>
<div style="left:164.50px;width:800px;text-align:center;top:645.58px;font-size:19px;line-height:19px;color:#1f1fff;font-weight:normal;white-space:pre;transform:scaleX(0.9204);transform-origin:center center;-webkit-text-stroke:0.35px #1f1fff;">06/08/2018</div>
<div style="left:275.40px;width:800px;text-align:center;top:645.58px;font-size:19px;line-height:19px;color:#1f1fff;font-weight:normal;white-space:pre;transform:scaleX(0.9183);transform-origin:center center;-webkit-text-stroke:0.35px #1f1fff;">01/09/2018</div>
<div style="left:734.70px;top:645.58px;font-size:19px;line-height:19px;color:#1f1fff;font-weight:normal;white-space:pre;transform:scaleX(0.8304);transform-origin:left center;-webkit-text-stroke:0.35px #1f1fff;">FORNECEDOR</div>
<div style="left:860.00px;top:645.58px;font-size:19px;line-height:19px;color:#1f1fff;font-weight:normal;white-space:pre;transform:scaleX(0.8473);transform-origin:left center;-webkit-text-stroke:0.35px #1f1fff;">9040</div>
<div style="left:931.00px;top:645.58px;font-size:19px;line-height:19px;color:#1f1fff;font-weight:normal;white-space:pre;transform:scaleX(0.8289);transform-origin:left center;-webkit-text-stroke:0.35px #1f1fff;">FORNEC - SP</div>
<div style="left:539.00px;width:600px;text-align:right;top:645.58px;font-size:19px;line-height:19px;color:#1f1fff;font-weight:normal;white-space:pre;transform:scaleX(0.8537);transform-origin:right center;-webkit-text-stroke:0.35px #1f1fff;">1.000,00</div>
<div style="left:173.20px;top:450.10px;width:1.60px;height:217.90px;background:#a0a0a0"></div>
<div style="left:264.70px;top:450.10px;width:1.60px;height:217.90px;background:#aaaaaa"></div>
<div style="left:355.20px;top:450.10px;width:1.60px;height:217.90px;background:#aaaaaa"></div>
<div style="left:435.70px;top:450.10px;width:1.60px;height:217.90px;background:#aaaaaa"></div>
<div style="left:507.70px;top:450.10px;width:1.60px;height:217.90px;background:#aaaaaa"></div>
<div style="left:618.20px;top:450.10px;width:1.60px;height:217.90px;background:#aaaaaa"></div>
<div style="left:729.70px;top:450.10px;width:1.60px;height:217.90px;background:#aaaaaa"></div>
<div style="left:853.70px;top:450.10px;width:1.60px;height:217.90px;background:#aaaaaa"></div>
<div style="left:925.20px;top:450.10px;width:1.60px;height:217.90px;background:#aaaaaa"></div>
<div style="left:1039.70px;top:450.10px;width:1.60px;height:217.90px;background:#aaaaaa"></div>
<div style="left:1141.20px;top:450.10px;width:1.60px;height:217.90px;background:#aaaaaa"></div>
<div style="left:151.20px;top:450.00px;width:991.80px;height:26.80px;border:2.4px solid #0a78d4;box-sizing:border-box"></div>
<div style="left:1396.00px;top:421.20px;width:26.00px;height:246.80px;background:#f3f3f3"></div>
<div style="left:1422.00px;top:420.00px;width:1.00px;height:276.00px;background:#e2e2e2"></div>
<svg style="left:1403px;top:431px" width="13" height="9" viewBox="0 0 13 9"><path d="M1.5 7.5L6.5 2.5L11.5 7.5" fill="none" stroke="#555" stroke-width="2.2"/></svg>
<div style="left:1398.00px;top:448.00px;width:22.00px;height:25.50px;background:#cdcdcd"></div>
<svg style="left:1403px;top:652px" width="13" height="9" viewBox="0 0 13 9"><path d="M1.5 1.5L6.5 6.5L11.5 1.5" fill="none" stroke="#555" stroke-width="2.2"/></svg>
<div style="left:152.80px;top:668.00px;width:1243.20px;height:28.50px;background:#f3f3f3"></div>
<div style="left:1161.00px;top:668.00px;width:39.00px;height:28.50px;background:#ececec"></div>
<div style="left:1396.00px;top:668.00px;width:26.00px;height:28.50px;background:#efefef"></div>
<div style="left:152.80px;top:669.50px;width:24.70px;height:26.50px;background:#f0f0f0;border-right:2px solid #707070;border-bottom:2px solid #707070;border-left:1px solid #fff;border-top:1px solid #fff;box-sizing:border-box"></div>
<svg style="left:161.65px;top:677.25px" width="7" height="11" viewBox="0 0 7 11"><path d="M6 0V10L0 5Z" fill="#000"/></svg>
<div style="left:177.50px;top:669.50px;width:34.50px;height:26.50px;background:#f0f0f0;border-right:2px solid #707070;border-bottom:2px solid #707070;border-left:1px solid #fff;border-top:1px solid #fff;box-sizing:border-box"></div>
<div style="left:1135.50px;top:669.50px;width:26.00px;height:26.00px;background:#f0f0f0;border-right:2px solid #707070;border-bottom:2px solid #707070;border-left:1px solid #fff;border-top:1px solid #fff;box-sizing:border-box"></div>
<svg style="left:1145.00px;top:677.00px" width="7" height="11" viewBox="0 0 7 11"><path d="M0 0V10L6 5Z" fill="#000"/></svg>
<div style="left:1370.00px;top:669.50px;width:26.00px;height:26.00px;background:#f0f0f0;border-right:2px solid #707070;border-bottom:2px solid #707070;border-left:1px solid #fff;border-top:1px solid #fff;box-sizing:border-box"></div>
<svg style="left:1379.50px;top:677.00px" width="7" height="11" viewBox="0 0 7 11"><path d="M0 0V10L6 5Z" fill="#000"/></svg>
<div style="left:151.00px;top:695.00px;width:61.00px;height:1.50px;background:#707070"></div>
<div style="left:151.00px;top:699.50px;width:1036.00px;height:1.50px;background:#6e6e6e"></div>
<div style="left:151.00px;top:701.00px;width:1036.00px;height:28.50px;background:#fff;border:2.2px solid #0a78d4;box-sizing:border-box"></div>
<div style="left:173.20px;top:703.00px;width:1.60px;height:24.30px;background:#b4b4b4"></div>
<div style="left:264.70px;top:703.00px;width:1.60px;height:24.30px;background:#b4b4b4"></div>
<div style="left:355.20px;top:703.00px;width:1.60px;height:24.30px;background:#b4b4b4"></div>
<div style="left:435.70px;top:703.00px;width:1.60px;height:24.30px;background:#b4b4b4"></div>
<div style="left:507.70px;top:703.00px;width:1.60px;height:24.30px;background:#b4b4b4"></div>
<div style="left:618.20px;top:703.00px;width:1.60px;height:24.30px;background:#b4b4b4"></div>
<div style="left:729.70px;top:703.00px;width:1.60px;height:24.30px;background:#b4b4b4"></div>
<div style="left:853.70px;top:703.00px;width:1.60px;height:24.30px;background:#b4b4b4"></div>
<div style="left:925.20px;top:703.00px;width:1.60px;height:24.30px;background:#b4b4b4"></div>
<div style="left:1039.70px;top:703.00px;width:1.60px;height:24.30px;background:#b4b4b4"></div>
<div style="left:1141.20px;top:703.00px;width:1.60px;height:24.30px;background:#b4b4b4"></div>
<div style="left:537.50px;width:600px;text-align:right;top:705.12px;font-size:19px;line-height:19px;color:#111;font-weight:bold;white-space:pre;transform:scaleX(0.9836);transform-origin:right center;-webkit-text-stroke:0.3px #111;">917.817,67</div>
<div style="left:151.00px;top:729.50px;width:1036.00px;height:26.50px;background:#f3f3f3"></div>
<div style="left:1200.00px;top:729.50px;width:222.00px;height:26.50px;background:#f3f3f3"></div>
<div style="left:151.00px;top:729.50px;width:1.80px;height:26.50px;background:#787878"></div>
<div style="left:152.80px;top:730.50px;width:24.70px;height:25.00px;background:#f0f0f0;border-right:2px solid #707070;border-bottom:2px solid #707070;border-left:1px solid #fff;border-top:1px solid #fff;box-sizing:border-box"></div>
<svg style="left:161.65px;top:737.50px" width="7" height="11" viewBox="0 0 7 11"><path d="M6 0V10L0 5Z" fill="#000"/></svg>
<div style="left:177.50px;top:730.50px;width:36.00px;height:25.00px;background:#f0f0f0;border-right:2px solid #707070;border-bottom:2px solid #707070;border-left:1px solid #fff;border-top:1px solid #fff;box-sizing:border-box"></div>
<div style="left:1162.00px;top:730.50px;width:25.50px;height:25.00px;background:#f0f0f0;border-right:2px solid #707070;border-bottom:2px solid #707070;border-left:1px solid #fff;border-top:1px solid #fff;box-sizing:border-box"></div>
<svg style="left:1171.25px;top:737.50px" width="7" height="11" viewBox="0 0 7 11"><path d="M0 0V10L6 5Z" fill="#000"/></svg>
<div style="left:1396.50px;top:730.50px;width:25.50px;height:25.00px;background:#f0f0f0;border-right:2px solid #707070;border-bottom:2px solid #707070;border-left:1px solid #fff;border-top:1px solid #fff;box-sizing:border-box"></div>
<svg style="left:1405.75px;top:737.50px" width="7" height="11" viewBox="0 0 7 11"><path d="M0 0V10L6 5Z" fill="#000"/></svg>
<div style="left:152.50px;top:767.85px;font-size:20.5px;line-height:20.5px;color:#2222ff;font-weight:normal;white-space:pre;transform:scaleX(0.9574);transform-origin:left center;">Total de Crédito</div>
<div style="left:299.00px;top:767.85px;font-size:20.5px;line-height:20.5px;color:#2222ff;font-weight:normal;white-space:pre;">:</div>
<div style="left:315.00px;top:767.85px;font-size:20.5px;line-height:20.5px;color:#2222ff;font-weight:normal;white-space:pre;transform:scaleX(0.9449);transform-origin:left center;">292.019,64</div>
<div style="left:152.50px;top:798.65px;font-size:20.5px;line-height:20.5px;color:#ff2222;font-weight:normal;white-space:pre;transform:scaleX(0.9576);transform-origin:left center;">Total de Débito</div>
<div style="left:299.00px;top:798.65px;font-size:20.5px;line-height:20.5px;color:#ff2222;font-weight:normal;white-space:pre;">:</div>
<div style="left:315.00px;top:798.65px;font-size:20.5px;line-height:20.5px;color:#ff2222;font-weight:normal;white-space:pre;transform:scaleX(0.9449);transform-origin:left center;">625.798,03</div>
<div style="left:0.00px;top:871.00px;width:1440.00px;height:29.00px;background:#f0f0f0"></div>
<div style="left:0.00px;top:872.00px;width:1440.00px;height:1.80px;background:#ababab"></div>
<div style="left:0.00px;top:896.00px;width:1440.00px;height:2.00px;background:#fdfdfd"></div>
<div style="left:0.00px;top:898.00px;width:1440.00px;height:2.00px;background:#b8b8b8"></div>
<div style="left:0.00px;top:872.00px;width:1.50px;height:24.00px;background:#ababab"></div>
<div style="left:841.50px;top:871.50px;width:4.30px;height:24.50px;background:#fafafa"></div>
<div style="left:845.80px;top:872.00px;width:2.40px;height:24.00px;background:#ababab"></div>
<div style="left:989.00px;top:871.50px;width:4.30px;height:24.50px;background:#fafafa"></div>
<div style="left:993.30px;top:872.00px;width:2.40px;height:24.00px;background:#ababab"></div>
<div style="left:1136.20px;top:871.50px;width:4.30px;height:24.50px;background:#fafafa"></div>
<div style="left:1140.50px;top:872.00px;width:2.40px;height:24.00px;background:#ababab"></div>
<div style="left:1284.20px;top:871.50px;width:4.30px;height:24.50px;background:#fafafa"></div>
<div style="left:1288.50px;top:872.00px;width:2.40px;height:24.00px;background:#ababab"></div>
<div style="left:1346.70px;top:871.50px;width:4.30px;height:24.50px;background:#fafafa"></div>
<div style="left:1351.00px;top:872.00px;width:2.40px;height:24.00px;background:#ababab"></div>
<div style="left:811.20px;width:800px;text-align:center;top:876.12px;font-size:19px;line-height:19px;color:#222;font-weight:normal;white-space:pre;transform:scaleX(0.9152);transform-origin:center center;">20/10/2020</div>
<div style="left:1298.00px;top:876.12px;font-size:19px;line-height:19px;color:#222;font-weight:normal;white-space:pre;transform:scaleX(0.8416);transform-origin:left center;">17:25</div>
<div style="left:1353px;top:874px;width:70px;height:22px;overflow:hidden"><div style="left:-6px;top:2.8px;font-size:18px;line-height:18px;color:#222;white-space:pre;transform:scaleX(0.88);transform-origin:left center">0.0.0.0-SI</div></div>
<svg style="left:1404px;top:880px" width="36" height="20" viewBox="0 0 36 20"><path d="M20 19L36 3M27 19L36 10" stroke="#9a9a9a" stroke-width="1.5"/></svg>
</body></html>
